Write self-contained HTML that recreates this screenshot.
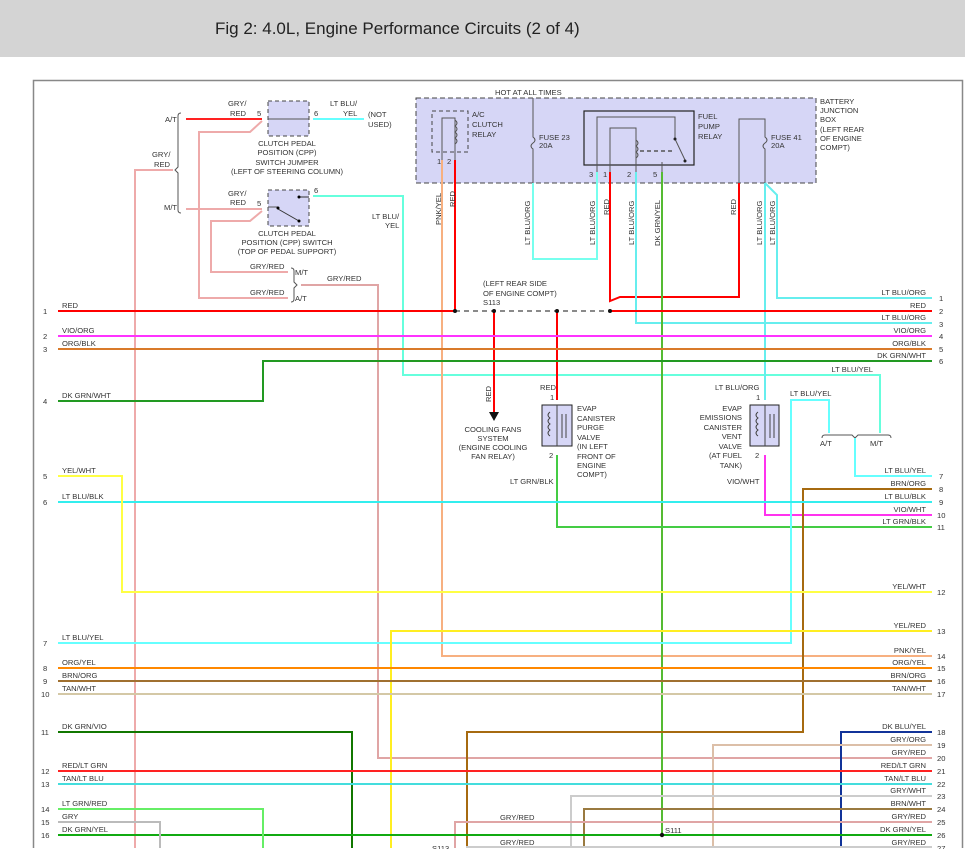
<!DOCTYPE html>
<html><head><meta charset="utf-8"><style>
html,body{margin:0;padding:0;background:#fff;width:965px;height:865px;overflow:hidden}
svg{display:block}
text{font-family:"Liberation Sans",sans-serif;font-size:7.6px;fill:#333}
.h{font-size:17px;fill:#222}
</style></head><body>
<svg width="965" height="865" viewBox="0 0 965 865" xmlns="http://www.w3.org/2000/svg">
<rect x="0" y="0" width="965" height="57" fill="#d4d4d4"/>
<text class="h" x="215" y="34">Fig 2: 4.0L, Engine Performance Circuits (2 of 4)</text>
<!-- frame -->
<path d="M33.5 848 V80.5 H962.5 V848" fill="none" stroke="#888" stroke-width="1.5"/>

<!-- junction box -->
<rect x="416" y="98" width="400" height="85" fill="#d6d6f6" stroke="#444" stroke-dasharray="5,3"/>
<rect x="432" y="111" width="36" height="41" fill="none" stroke="#444" stroke-dasharray="4,3"/>
<rect x="584" y="111" width="110" height="54" fill="none" stroke="#222" stroke-width="1.2"/>
<g fill="none" stroke="#555" stroke-width="1">
<path d="M442 160 V118 H455 V160"/>
<path d="M455 120 q4 3 0 6 q4 3 0 6 q4 3 0 6 q4 3 0 6"/>
<path d="M533 98 V137 q4 3 0 6 q-4 3 0 6 V183"/>
<path d="M597 172 V117 H675 V139 L685 160"/>
<path d="M610 172 V128 H636 V172"/>
<path d="M636 140 q4 3 0 6 q4 3 0 6 q4 3 0 6"/>
<path d="M640 151 H672" stroke-dasharray="4,3" stroke-width="1.5"/>
<path d="M662 172 V162"/>
<path d="M739 183 V119 H765 V137 q4 3 0 6 q-4 3 0 6 V183" />
</g>
<circle cx="675" cy="139" r="1.5" fill="#222"/><circle cx="685" cy="161" r="1.5" fill="#222"/>
<text x="495" y="95">HOT AT ALL TIMES</text>
<text x="472" y="117">A/C</text><text x="472" y="127">CLUTCH</text><text x="472" y="137">RELAY</text>
<text x="437" y="164">1</text><text x="447" y="164">2</text>
<text x="539" y="140">FUSE 23</text><text x="539" y="148">20A</text>
<text x="698" y="119">FUEL</text><text x="698" y="129">PUMP</text><text x="698" y="139">RELAY</text>
<text x="589" y="177">3</text><text x="603" y="177">1</text><text x="627" y="177">2</text><text x="653" y="177">5</text>
<text x="771" y="140">FUSE 41</text><text x="771" y="148">20A</text>
<text x="820" y="104">BATTERY</text><text x="820" y="113">JUNCTION</text><text x="820" y="122">BOX</text>
<text x="820" y="132">(LEFT REAR</text><text x="820" y="141">OF ENGINE</text><text x="820" y="150">COMPT)</text>

<!-- CPP boxes -->
<rect x="268" y="101" width="41" height="35" fill="#d6d6f6" stroke="#444" stroke-dasharray="4,3"/>
<rect x="268" y="190" width="41" height="36" fill="#d6d6f6" stroke="#444" stroke-dasharray="4,3"/>
<path d="M268 119 H309" stroke="#555"/>
<path d="M278 209 L299 221 M299 197 H309" stroke="#333"/><path d="M268 207 H278" stroke="#555"/>
<circle cx="278" cy="208" r="1.5"/><circle cx="299" cy="221" r="1.5"/><circle cx="299" cy="197" r="1.5"/>
<g fill="none" stroke="#555"><path d="M181 113 q-3 0 -3 3 V167 l-3 3 l3 3 V210 q0 3 3 3"/>
<path d="M291 268 q3 0 3 3 V282 l3 3 l-3 3 V299 q0 3 -3 3"/>
<path d="M822 438 q0 -3 3 -3 H852 l3 3 l3 -3 H888 q3 0 3 3"/></g>
<text x="165" y="122">A/T</text><text x="164" y="210">M/T</text>
<text x="152" y="157">GRY/</text><text x="154" y="167">RED</text>
<text x="228" y="106">GRY/</text><text x="230" y="116">RED</text><text x="257" y="116">5</text><text x="314" y="116">6</text>
<text x="330" y="106">LT BLU/</text><text x="343" y="116">YEL</text>
<text x="368" y="117">(NOT</text><text x="368" y="127">USED)</text>
<g text-anchor="middle"><text x="287" y="146">CLUTCH PEDAL</text><text x="287" y="155">POSITION (CPP)</text><text x="287" y="165">SWITCH JUMPER</text><text x="287" y="174">(LEFT OF STEERING COLUMN)</text>
<text x="287" y="236">CLUTCH PEDAL</text><text x="287" y="245">POSITION (CPP) SWITCH</text><text x="287" y="254">(TOP OF PEDAL SUPPORT)</text>
<text x="493" y="432">COOLING FANS</text><text x="493" y="441">SYSTEM</text><text x="493" y="450">(ENGINE COOLING</text><text x="493" y="459">FAN RELAY)</text></g>
<text x="228" y="196">GRY/</text><text x="230" y="205">RED</text><text x="257" y="206">5</text><text x="314" y="193">6</text>
<text x="372" y="219">LT BLU/</text><text x="385" y="228">YEL</text>
<text x="250" y="269">GRY/RED</text><text x="295" y="275">M/T</text><text x="327" y="281">GRY/RED</text>
<text x="250" y="295">GRY/RED</text><text x="295" y="301">A/T</text>

<!-- wires -->
<g fill="none" stroke-width="2">
<path d="M186 119 H262" stroke="#f22"/>
<path d="M186 209 H262" stroke="#eaa"/>
<path d="M313 119 H364" stroke="#6ff"/>
<path d="M173 170 H135 V848" stroke="#eaa"/>
<path d="M262 121 L250 132 H199 V298 H288" stroke="#eaa"/>
<path d="M262 211 L250 221 H211 V272 H288" stroke="#eaa"/>
<path d="M301 285 H378 V758 H932" stroke="#e0a5a5"/>
<path d="M313 196 H403 V375 H880 V433" stroke="#6fd"/>
<path d="M442 160 V656 H932" stroke="#f7b080"/>
<path d="M455 160 V311" stroke="#f00"/>
<path d="M533 183 V259 H597 V172" stroke="#7fe"/>
<path d="M610 172 V301 L620 297 H739 V183" stroke="#f00"/>
<path d="M636 172 V323 H932" stroke="#6ee"/>
<path d="M662 172 V835" stroke="#5b3"/>
<path d="M765 183 V400" stroke="#6ee"/>
<path d="M765 183 L777 195 V298 H932" stroke="#6ee"/>
<path d="M58 311 H455 M610 311 H932" stroke="#f00"/>
<path d="M494 311 V412 M557 311 V400" stroke="#f00"/>
<path d="M58 336 H932" stroke="#f3f"/>
<path d="M58 349 H932" stroke="#d97a2a"/>
<path d="M58 401 H263 V361 H932" stroke="#292"/>
<path d="M557 455 V527 H932" stroke="#4c4"/>
<path d="M765 455 V515 H932" stroke="#f3e"/>
<path d="M855 438 V476 H932" stroke="#6ff"/>
<path d="M829 433 V400 H791 V643 H58" stroke="#6ff"/>
<path d="M932 489 H803 V732 H467 V848" stroke="#a66a10"/>
<path d="M58 502 H932" stroke="#3ee"/>
<path d="M58 476 H122 V592 H932" stroke="#ff4"/>
<path d="M932 631 H391 V848" stroke="#fe2"/>
<path d="M58 668 H932" stroke="#f80"/>
<path d="M58 681 H932" stroke="#a07030"/>
<path d="M58 694 H932" stroke="#d4c8a6"/>
<path d="M58 732 H352 V848" stroke="#170"/>
<path d="M932 732 H841 V848" stroke="#139"/>
<path d="M932 745 H713 V848" stroke="#dcbfa8"/>
<path d="M58 771 H932" stroke="#f22"/>
<path d="M58 784 H932" stroke="#4dd"/>
<path d="M932 796 H571 V848" stroke="#ccc"/>
<path d="M932 809 H584 V848" stroke="#9a7a40"/>
<path d="M932 822 H455 V848" stroke="#e0a5a5"/>
<path d="M58 835 H932" stroke="#1a1"/>
<path d="M58 809 H263 V848" stroke="#6e6"/>
<path d="M58 822 H160 V848" stroke="#bbb"/>
<path d="M466 847 H932" stroke="#ccc"/>
</g>
<path d="M455 311 H610" stroke="#444" stroke-width="1.3" stroke-dasharray="5,4"/>
<g fill="#111"><circle cx="455" cy="311" r="2"/><circle cx="494" cy="311" r="2"/><circle cx="557" cy="311" r="2"/><circle cx="610" cy="311" r="2"/><circle cx="662" cy="835" r="2.2"/>
<path d="M489 412 h10 l-5 9 z"/></g>
<text x="483" y="286">(LEFT REAR SIDE</text><text x="483" y="296">OF ENGINE COMPT)</text><text x="483" y="305">S113</text>

<!-- vertical labels -->
<g>
<text transform="translate(441,225) rotate(-90)">PNK/YEL</text>
<text transform="translate(455,207) rotate(-90)">RED</text>
<text transform="translate(530,245) rotate(-90)">LT BLU/ORG</text>
<text transform="translate(595,245) rotate(-90)">LT BLU/ORG</text>
<text transform="translate(609,215) rotate(-90)">RED</text>
<text transform="translate(634,245) rotate(-90)">LT BLU/ORG</text>
<text transform="translate(660,246) rotate(-90)">DK GRN/YEL</text>
<text transform="translate(736,215) rotate(-90)">RED</text>
<text transform="translate(762,245) rotate(-90)">LT BLU/ORG</text>
<text transform="translate(775,245) rotate(-90)">LT BLU/ORG</text>
<text transform="translate(491,402) rotate(-90)">RED</text>
</g>

<!-- valves -->
<rect x="542" y="405" width="30" height="41" fill="#d6d6f6" stroke="#222"/>
<rect x="750" y="405" width="29" height="41" fill="#d6d6f6" stroke="#222"/>
<g fill="none" stroke="#444"><path d="M557 405 V446 M550 412 q-4 3 0 6 q-4 3 0 6 q-4 3 0 6 q-4 3 0 6 M562 414 V438 M566 414 V438"/>
<path d="M765 405 V446 M758 412 q-4 3 0 6 q-4 3 0 6 q-4 3 0 6 q-4 3 0 6 M770 414 V438 M774 414 V438"/></g>
<text x="540" y="390">RED</text><text x="550" y="400">1</text><text x="549" y="458">2</text>
<g><text x="577" y="411">EVAP</text><text x="577" y="421">CANISTER</text><text x="577" y="430">PURGE</text><text x="577" y="440">VALVE</text><text x="577" y="449">(IN LEFT</text><text x="577" y="459">FRONT OF</text><text x="577" y="468">ENGINE</text><text x="577" y="477">COMPT)</text></g>
<text x="510" y="484">LT GRN/BLK</text>
<text x="715" y="390">LT BLU/ORG</text><text x="756" y="400">1</text><text x="755" y="458">2</text>
<g text-anchor="end"><text x="742" y="411">EVAP</text><text x="742" y="420">EMISSIONS</text><text x="742" y="430">CANISTER</text><text x="742" y="439">VENT</text><text x="742" y="449">VALVE</text><text x="742" y="458">(AT FUEL</text><text x="742" y="468">TANK)</text></g>
<text x="727" y="484">VIO/WHT</text>
<text x="790" y="396">LT BLU/YEL</text>
<text x="820" y="446">A/T</text><text x="870" y="446">M/T</text>
<text x="665" y="833">S111</text>
<text x="500" y="820">GRY/RED</text><text x="500" y="845">GRY/RED</text>
<text x="432" y="851">S113</text>

<!-- left labels -->
<g>
<text x="62" y="308">RED</text><text x="62" y="333">VIO/ORG</text><text x="62" y="346">ORG/BLK</text><text x="62" y="398">DK GRN/WHT</text>
<text x="62" y="473">YEL/WHT</text><text x="62" y="499">LT BLU/BLK</text><text x="62" y="640">LT BLU/YEL</text>
<text x="62" y="665">ORG/YEL</text><text x="62" y="678">BRN/ORG</text><text x="62" y="691">TAN/WHT</text>
<text x="62" y="729">DK GRN/VIO</text><text x="62" y="768">RED/LT GRN</text><text x="62" y="781">TAN/LT BLU</text>
<text x="62" y="806">LT GRN/RED</text><text x="62" y="819">GRY</text><text x="62" y="832">DK GRN/YEL</text>
</g>
<g>
<text x="43" y="314">1</text><text x="43" y="339">2</text><text x="43" y="352">3</text><text x="43" y="404">4</text>
<text x="43" y="479">5</text><text x="43" y="505">6</text><text x="43" y="646">7</text><text x="43" y="671">8</text>
<text x="43" y="684">9</text><text x="41" y="697">10</text><text x="41" y="735">11</text><text x="41" y="774">12</text>
<text x="41" y="787">13</text><text x="41" y="812">14</text><text x="41" y="825">15</text><text x="41" y="838">16</text>
</g>
<!-- right labels -->
<g text-anchor="end">
<text x="926" y="295">LT BLU/ORG</text><text x="926" y="308">RED</text><text x="926" y="320">LT BLU/ORG</text><text x="926" y="333">VIO/ORG</text>
<text x="926" y="346">ORG/BLK</text><text x="926" y="358">DK GRN/WHT</text><text x="873" y="372">LT BLU/YEL</text>
<text x="926" y="473">LT BLU/YEL</text><text x="926" y="486">BRN/ORG</text><text x="926" y="499">LT BLU/BLK</text><text x="926" y="512">VIO/WHT</text><text x="926" y="524">LT GRN/BLK</text>
<text x="926" y="589">YEL/WHT</text><text x="926" y="628">YEL/RED</text><text x="926" y="653">PNK/YEL</text><text x="926" y="665">ORG/YEL</text>
<text x="926" y="678">BRN/ORG</text><text x="926" y="691">TAN/WHT</text><text x="926" y="729">DK BLU/YEL</text><text x="926" y="742">GRY/ORG</text>
<text x="926" y="755">GRY/RED</text><text x="926" y="768">RED/LT GRN</text><text x="926" y="781">TAN/LT BLU</text><text x="926" y="793">GRY/WHT</text>
<text x="926" y="806">BRN/WHT</text><text x="926" y="819">GRY/RED</text><text x="926" y="832">DK GRN/YEL</text><text x="926" y="845">GRY/RED</text>
</g>
<g>
<text x="939" y="301">1</text><text x="939" y="314">2</text><text x="939" y="327">3</text><text x="939" y="339">4</text><text x="939" y="352">5</text><text x="939" y="364">6</text>
<text x="939" y="479">7</text><text x="939" y="492">8</text><text x="939" y="505">9</text><text x="937" y="518">10</text><text x="937" y="530">11</text><text x="937" y="595">12</text>
<text x="937" y="634">13</text><text x="937" y="659">14</text><text x="937" y="671">15</text><text x="937" y="684">16</text><text x="937" y="697">17</text><text x="937" y="735">18</text>
<text x="937" y="748">19</text><text x="937" y="761">20</text><text x="937" y="774">21</text><text x="937" y="787">22</text><text x="937" y="799">23</text><text x="937" y="812">24</text>
<text x="937" y="825">25</text><text x="937" y="838">26</text><text x="937" y="851">27</text>
</g>
<rect x="0" y="849" width="965" height="16" fill="#fff"/>
</svg>
</body></html>
